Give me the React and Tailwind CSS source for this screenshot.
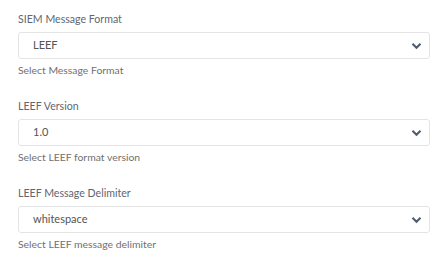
import React from 'react';

const fields = [
  { label: 'SIEM Message Format', value: 'LEEF', help: 'Select Message Format' },
  { label: 'LEEF Version', value: '1.0', help: 'Select LEEF format version' },
  { label: 'LEEF Message Delimiter', value: 'whitespace', help: 'Select LEEF message delimiter' },
];

const Chevron = () => (
  <svg width="11" height="8" viewBox="0 0 11 8" className="text-[#4f5b6e]">
    <path d="M1.5 1.8 L5.5 5.8 L9.5 1.8" fill="none" stroke="currentColor" strokeWidth="2.1" />
  </svg>
);

export default function App() {
  return (
    <div className="w-[448px] h-[269px] bg-white pl-[18px] pr-[18px] pt-[12px] font-['Lato',sans-serif] flex flex-col gap-[21px]">
      {fields.map((f) => (
        <div key={f.label} className="flex flex-col">
          <div className="text-[10.6px] leading-[15px] text-[#5f6670]">{f.label}</div>
          <div className="mt-[5px] h-[27px] border border-[#e4e4e4] rounded-[3px] flex items-center justify-between pl-[14px] pr-[7px]">
            <span className="text-[11px] text-[#555]">{f.value}</span>
            <Chevron />
          </div>
          <div className="mt-[4px] text-[10.4px] leading-[15px] text-[#707070]">{f.help}</div>
        </div>
      ))}
    </div>
  );
}
